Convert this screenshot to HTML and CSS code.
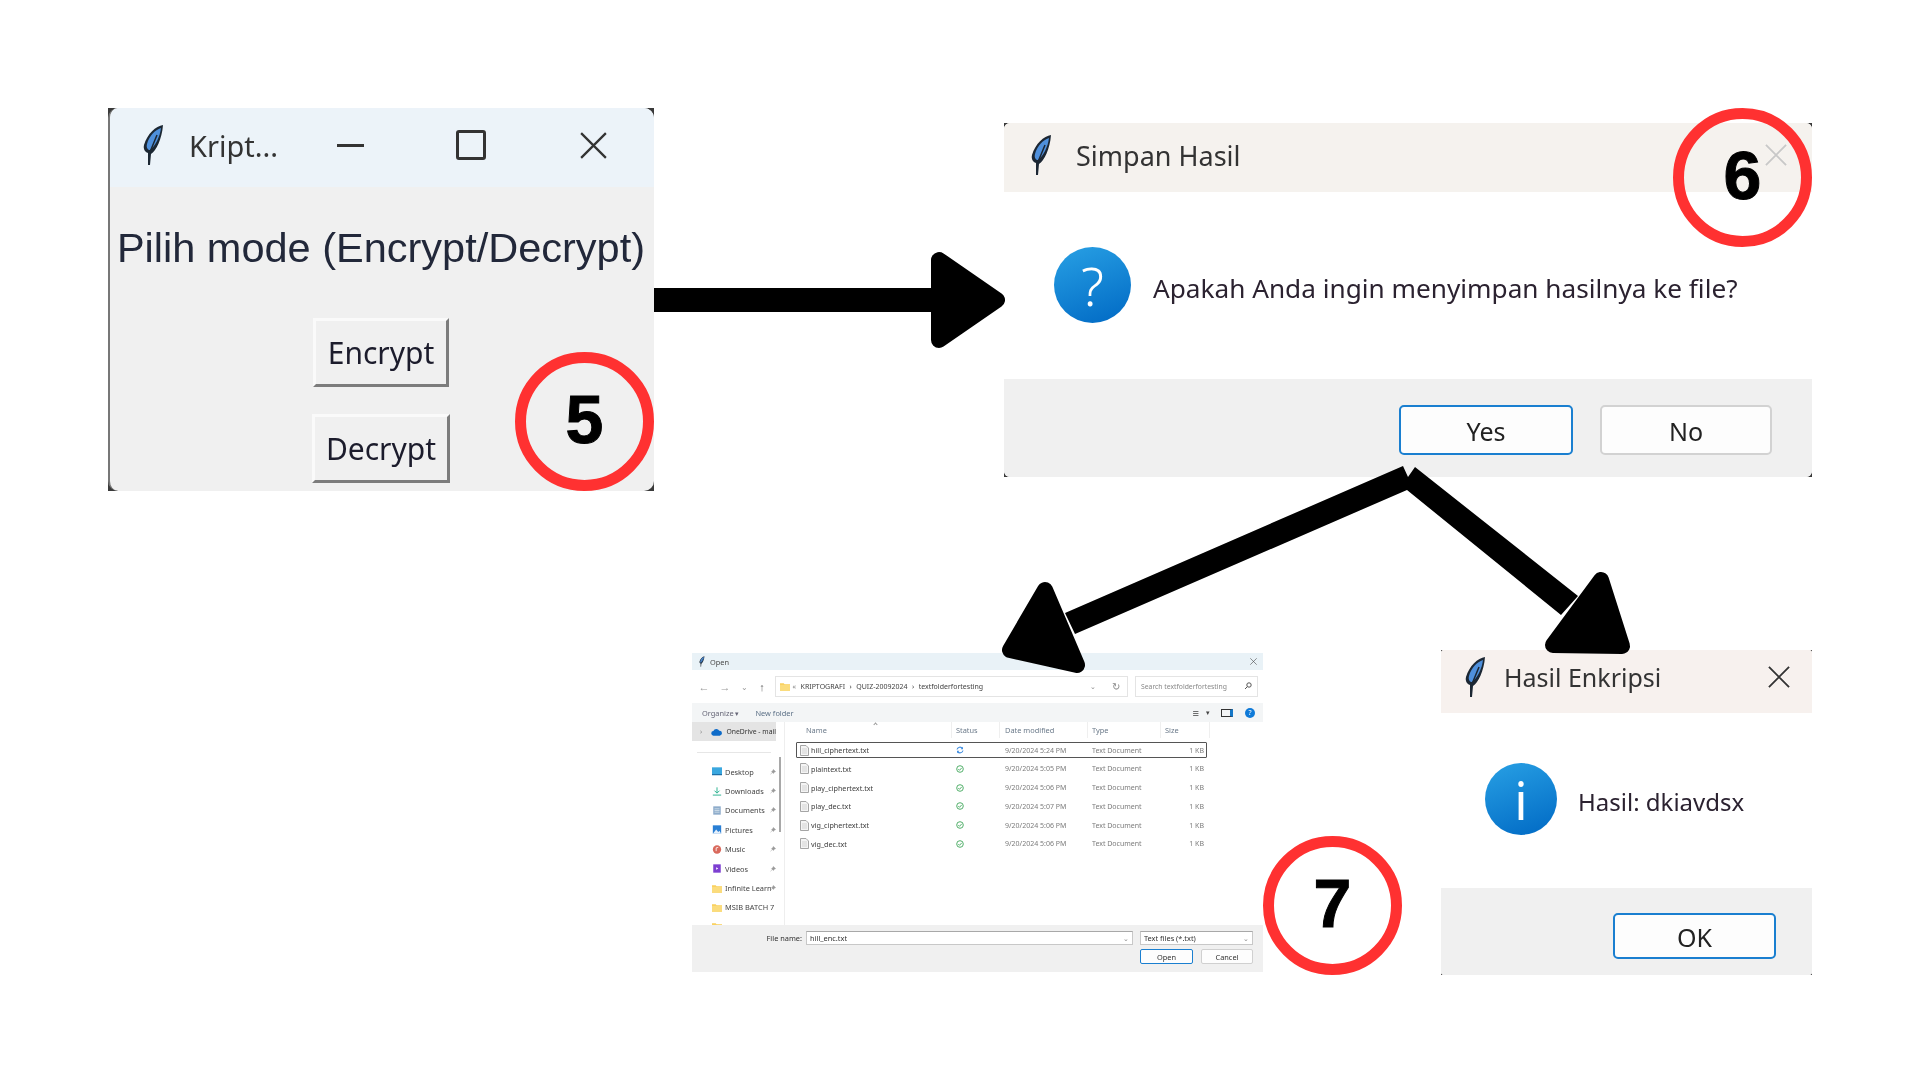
FILE: index.html
```html
<!DOCTYPE html>
<html lang="en">
<head>
    <meta charset="UTF-8">
    <title>Kriptografi - Alur Program</title>
    <link rel="stylesheet" href="styles.css">
</head>
<body>
    <svg class="defs" width="0" height="0">
        <symbol id="feather" viewBox="0 0 23 42">
            <path d="M21 1C14 2 5 10 2 21C1 25 3 28 6 29L6 41L8 41L9 30C14 27 20 15 21 1Z" fill="#1c2733"/>
            <path d="M19 4C13 6 7 12 5 20C4 24 6 26 8 26C13 22 18 13 19 4Z" fill="#4f90dc"/>
            <path d="M8 28L15 11" stroke="#1c2733" stroke-width="1.5" fill="none"/>
        </symbol>
        <symbol id="close" viewBox="0 0 24 24">
            <path d="M1 1L23 23M23 1L1 23" stroke="currentColor" stroke-width="2" fill="none"/>
        </symbol>
        <symbol id="folder" viewBox="0 0 12 10">
            <path d="M0 1h4.500l1 1.200H12V10H0Z" fill="#f9cf5b"/>
            <path d="M0 3h12v7H0Z" fill="#fbdc7c"/>
        </symbol>
        <symbol id="doc" viewBox="0 0 9 11">
            <path d="M.5.5h5.500l2.500 2.500v7.500h-8Z" fill="#f4f4f4" stroke="#a5a5a5"/>
            <path d="M2 4h5M2 6h5M2 8h5" stroke="#c4c4c4" stroke-width=".7"/>
        </symbol>
        <symbol id="ok" viewBox="0 0 8 8">
            <circle cx="4" cy="4" r="3.300" fill="none" stroke="#3fa75a" stroke-width=".9"/>
            <path d="M2.300 4.100l1.200 1.200 2.200-2.400" fill="none" stroke="#3fa75a" stroke-width=".9"/>
        </symbol>
        <symbol id="sync" viewBox="0 0 8 8">
            <path d="M1 3.500A3 3 0 0 1 6.400 2.400M7 4.500A3 3 0 0 1 1.600 5.600" fill="none" stroke="#3f8de0" stroke-width="1.100"/>
            <path d="M7 .8v2.400H4.600ZM1 7.200V4.800h2.400Z" fill="#3f8de0"/>
        </symbol>
        <symbol id="pin" viewBox="0 0 8 8">
            <path d="M4.500.5L7.500 3.500L6 4L4.500 6L2 3.500L4 2ZM2.800 4.800L.8 7.200" fill="#9a9a9a" stroke="#9a9a9a" stroke-width=".6"/>
        </symbol>
    </svg>

    <div class="stage">
        <!-- 5: pilih mode -->
        <div class="win win-mode">
            <div class="win-inner">
                <div class="titlebar title-blue mode-title">
                    <svg class="feather"><use href="#feather"/></svg>
                    <span class="mode-title-text">Kript...</span>
                    <span class="min-btn"></span>
                    <span class="max-btn"></span>
                    <svg class="mode-close"><use href="#close"/></svg>
                </div>
                <div class="mode-body">
                    <div class="mode-label">Pilih mode (Encrypt/Decrypt)</div>
                    <button class="tk-btn">Encrypt</button>
                    <button class="tk-btn tk-btn-wide">Decrypt</button>
                </div>
            </div>
        </div>

        <!-- 6: simpan hasil -->
        <div class="win win-save">
            <div class="win-inner">
                <div class="titlebar title-sand save-title">
                    <svg class="feather"><use href="#feather"/></svg>
                    <span>Simpan Hasil</span>
                    <svg class="dlg-close dlg-close-faded"><use href="#close"/></svg>
                </div>
                <div class="dlg-body save-body">
                    <div class="round-icon save-icon">?</div>
                    <div class="dlg-text">Apakah Anda ingin menyimpan hasilnya ke file?</div>
                </div>
                <div class="dlg-footer save-footer">
                    <button class="dlg-btn dlg-btn-focus">Yes</button>
                    <button class="dlg-btn">No</button>
                </div>
            </div>
        </div>

        <!-- 7: open dialog -->
        <div class="win-open">
            <div class="open-title">
                <svg class="open-feather"><use href="#feather"/></svg>
                <span class="open-title-text">Open</span>
                <svg class="open-close"><use href="#close"/></svg>
            </div>
            <div class="open-nav">
                <span class="nav-icon nav-back">←</span>
                <span class="nav-icon nav-forward">→</span>
                <span class="nav-icon nav-down">⌄</span>
                <span class="nav-icon nav-up">↑</span>
                <div class="address">
                    <svg class="side-icon"><use href="#folder"/></svg>
                    <span class="crumb crumb-more">«</span>
                    <span class="crumb">KRIPTOGRAFI</span>
                    <span class="crumb">›</span>
                    <span class="crumb">QUIZ-20092024</span>
                    <span class="crumb">›</span>
                    <span class="crumb">textfolderfortesting</span>
                    <span class="address-end">⌄</span>
                    <span class="address-refresh">↻</span>
                </div>
                <div class="search">
                    <span>Search textfolderfortesting</span>
                    <svg class="search-icon" viewBox="0 0 8 8"><circle cx="5" cy="3" r="2.200" fill="none" stroke="#555"/><path d="M3.400 4.600L1 7" stroke="#555"/></svg>
                </div>
            </div>
            <div class="open-toolbar">
                <span class="tool-organize">Organize ▾</span>
                <span class="tool-new">New folder</span>
                <span class="tool-view">≡</span>
                <span class="tool-caret">▾</span>
                <span class="tool-pane"></span>
                <span class="tool-help">?</span>
            </div>
            <div class="open-main">
                <div class="sidebar">
                    <div class="side-drive">
                        <span class="side-chevron">›</span>
                        <svg class="cloud" viewBox="0 0 12 8"><path d="M3 8a2.500 2.500 0 0 1-.4-5A3.500 3.500 0 0 1 9 2.600 2.700 2.700 0 0 1 9.500 8Z" fill="#0f6cc9"/></svg>
                        <span>OneDrive - mail</span>
                    </div>
                    <div class="side-rule"></div>
                    <div class="side-item">
                        <svg class="side-icon" viewBox="0 0 12 10"><rect width="12" height="8" fill="#3aa7df"/><rect y="8" width="12" height="1.500" fill="#1e6fa8"/></svg>
                        <span class="side-name">Desktop</span>
                        <svg class="pin"><use href="#pin"/></svg>
                    </div>
                    <div class="side-item">
                        <svg class="side-icon" viewBox="0 0 12 10"><path d="M6 0v6.500M3 4l3 3 3-3M1 9.300h10" stroke="#1fae8a" stroke-width="1.100" fill="none"/></svg>
                        <span class="side-name">Downloads</span>
                        <svg class="pin"><use href="#pin"/></svg>
                    </div>
                    <div class="side-item">
                        <svg class="side-icon" viewBox="0 0 12 10"><rect x="1.500" width="9" height="10" fill="#8eaccb"/><path d="M3 3h6M3 5h6M3 7h6" stroke="#e6eef5" stroke-width=".8"/></svg>
                        <span class="side-name">Documents</span>
                        <svg class="pin"><use href="#pin"/></svg>
                    </div>
                    <div class="side-item">
                        <svg class="side-icon" viewBox="0 0 12 10"><rect x="1" width="10" height="10" fill="#2a7fd4"/><path d="M1 10l4-5 2.500 3 1.500-1.500 2 3.500Z" fill="#e5f0fb"/></svg>
                        <span class="side-name">Pictures</span>
                        <svg class="pin"><use href="#pin"/></svg>
                    </div>
                    <div class="side-item">
                        <svg class="side-icon" viewBox="0 0 12 10"><circle cx="6" cy="5" r="5" fill="#d9695c"/><path d="M5 7V3l2.500-.5" stroke="#fff" fill="none"/></svg>
                        <span class="side-name">Music</span>
                        <svg class="pin"><use href="#pin"/></svg>
                    </div>
                    <div class="side-item">
                        <svg class="side-icon" viewBox="0 0 12 10"><rect x="1.500" width="9" height="10" fill="#7d3fd1"/><path d="M5 3.500l2.500 1.500L5 6.500Z" fill="#fff"/></svg>
                        <span class="side-name">Videos</span>
                        <svg class="pin"><use href="#pin"/></svg>
                    </div>
                    <div class="side-item">
                        <svg class="side-icon"><use href="#folder"/></svg>
                        <span class="side-name">Infinite Learn</span>
                        <svg class="pin"><use href="#pin"/></svg>
                    </div>
                    <div class="side-item">
                        <svg class="side-icon"><use href="#folder"/></svg>
                        <span class="side-name">MSIB BATCH 7</span>
                    </div>
                    <div class="side-item">
                        <svg class="side-icon"><use href="#folder"/></svg>
                        <span class="side-name">Canva Bulk</span>
                    </div>
                </div>
                <div class="side-scroll"><span class="side-thumb"></span></div>
                <div class="files">
                    <div class="file-head">
                        <span class="head-name">Name</span>
                        <span class="head-status">Status</span>
                        <span class="head-date">Date modified</span>
                        <span class="head-type">Type</span>
                        <span class="head-size">Size</span>
                        <span class="sort-caret"></span>
                    </div>
                    <div class="file-row file-row-on">
                        <svg class="file-icon"><use href="#doc"/></svg>
                        <span class="file-name">hill_ciphertext.txt</span>
                        <svg class="file-state"><use href="#sync"/></svg>
                        <span class="file-meta">9/20/2024 5:24 PM</span>
                        <span class="file-meta">Text Document</span>
                        <span class="file-meta file-size">1 KB</span>
                    </div>
                    <div class="file-row">
                        <svg class="file-icon"><use href="#doc"/></svg>
                        <span class="file-name">plaintext.txt</span>
                        <svg class="file-state"><use href="#ok"/></svg>
                        <span class="file-meta">9/20/2024 5:05 PM</span>
                        <span class="file-meta">Text Document</span>
                        <span class="file-meta file-size">1 KB</span>
                    </div>
                    <div class="file-row">
                        <svg class="file-icon"><use href="#doc"/></svg>
                        <span class="file-name">play_ciphertext.txt</span>
                        <svg class="file-state"><use href="#ok"/></svg>
                        <span class="file-meta">9/20/2024 5:06 PM</span>
                        <span class="file-meta">Text Document</span>
                        <span class="file-meta file-size">1 KB</span>
                    </div>
                    <div class="file-row">
                        <svg class="file-icon"><use href="#doc"/></svg>
                        <span class="file-name">play_dec.txt</span>
                        <svg class="file-state"><use href="#ok"/></svg>
                        <span class="file-meta">9/20/2024 5:07 PM</span>
                        <span class="file-meta">Text Document</span>
                        <span class="file-meta file-size">1 KB</span>
                    </div>
                    <div class="file-row">
                        <svg class="file-icon"><use href="#doc"/></svg>
                        <span class="file-name">vig_ciphertext.txt</span>
                        <svg class="file-state"><use href="#ok"/></svg>
                        <span class="file-meta">9/20/2024 5:06 PM</span>
                        <span class="file-meta">Text Document</span>
                        <span class="file-meta file-size">1 KB</span>
                    </div>
                    <div class="file-row">
                        <svg class="file-icon"><use href="#doc"/></svg>
                        <span class="file-name">vig_dec.txt</span>
                        <svg class="file-state"><use href="#ok"/></svg>
                        <span class="file-meta">9/20/2024 5:06 PM</span>
                        <span class="file-meta">Text Document</span>
                        <span class="file-meta file-size">1 KB</span>
                    </div>
                </div>
            </div>
            <div class="open-footer">
                <div class="open-line">
                    <span class="open-label">File name:</span>
                    <div class="open-input"><span>hill_enc.txt</span><span class="open-chevron">⌄</span></div>
                    <div class="open-filter"><span>Text files (*.txt)</span><span class="open-chevron">⌄</span></div>
                </div>
                <div class="open-actions">
                    <button class="open-btn open-btn-focus">Open</button>
                    <button class="open-btn">Cancel</button>
                </div>
            </div>
        </div>

        <!-- 7: hasil enkripsi -->
        <div class="win win-result">
            <div class="win-inner">
                <div class="titlebar title-rose result-title">
                    <svg class="feather result-feather"><use href="#feather"/></svg>
                    <span>Hasil Enkripsi</span>
                    <svg class="dlg-close"><use href="#close"/></svg>
                </div>
                <div class="dlg-body result-body">
                    <div class="round-icon result-icon">i</div>
                    <div class="dlg-text">Hasil: dkiavdsx</div>
                </div>
                <div class="dlg-footer result-footer">
                    <button class="dlg-btn dlg-btn-focus result-ok">OK</button>
                </div>
            </div>
        </div>

        <svg class="arrows" viewBox="0 0 1920 1080">
            <rect x="654" y="288" width="285" height="24"/>
            <polygon class="head" points="939,260 939,340 997,300"/>
            <polygon points="1065,613 1403,466 1408,477 1415,467 1578,596 1561,615 1407,490 1075,634"/>
            <polygon class="head" points="1045,590 1010,650 1077,665"/>
            <polygon class="head" points="1601,580 1622,646 1553,645"/>
        </svg>

        <div class="step step-5">5</div>
        <div class="step step-6">6</div>
        <div class="step step-7">7</div>
    </div>
</body>
</html>
```

FILE: styles.css
```css
body {
    margin: 0;
    background-color: #fff;
    font-family: "Noto Sans", "Open Sans", sans-serif;
    color: #222;
}
button {
    font-family: inherit;
    padding: 0;
}
.defs {
    position: absolute;
}
.stage {
    position: relative;
    width: 1920px;
    height: 1080px;
    overflow: hidden;
}

/* the pasted screenshots */
.win {
    position: absolute;
    background-color: #3a3a3a;
    filter: blur(0.7px);
}
.win-inner {
    display: flex;
    flex-direction: column;
    height: 100%;
    overflow: hidden;
    background-color: #fff;
}
.win-mode {
    left: 108px;
    top: 108px;
    width: 546px;
    height: 383px;
}
.win-mode .win-inner {
    border-radius: 10px;
    border-left: 2px solid #777;
    box-sizing: border-box;
    background-color: #f0f0f0;
}
.win-save {
    left: 1004px;
    top: 123px;
    width: 808px;
    height: 354px;
}
.win-save .win-inner {
    border-radius: 6px;
}
.win-result {
    left: 1441px;
    top: 650px;
    width: 371px;
    height: 325px;
}
.win-result .win-inner {
    border-radius: 3px;
}

.titlebar {
    display: flex;
    align-items: center;
    flex: none;
    box-sizing: border-box;
}
.title-blue {
    background-color: #ecf3f9;
}
.title-sand {
    background-color: #f5f2ee;
}
.title-rose {
    background-color: #f7f1ee;
}
.feather {
    width: 23px;
    height: 42px;
    flex: none;
}

/* 5 */
.mode-title {
    height: 79px;
    padding: 0 0 5px 32px;
}
.mode-title-text {
    margin-left: 24px;
    width: 148px;
    font-size: 29px;
    color: #333;
}
.min-btn {
    width: 27px;
    height: 3px;
    background-color: #333;
}
.max-btn {
    width: 24px;
    height: 24px;
    margin-left: 92px;
    border: 3px solid #333;
    border-radius: 3px;
}
.mode-close {
    width: 27px;
    height: 27px;
    margin-left: 94px;
    color: #333;
}
.mode-body {
    display: flex;
    flex-direction: column;
    align-items: center;
    flex: 1;
    padding-right: 2px;
}
.mode-label {
    margin-top: 33px;
    font-family: "Liberation Sans", Arial, sans-serif;
    font-size: 41.500px;
    line-height: 56px;
    white-space: nowrap;
    color: #22283a;
}
.tk-btn {
    width: 136px;
    height: 69px;
    margin-top: 42px;
    box-sizing: border-box;
    border: 3px solid;
    border-color: #fafafa #7c7c7c #7c7c7c #fafafa;
    background-color: #f0f0f0;
    font-size: 30px;
    color: #1c1c2c;
}
.tk-btn-wide {
    width: 138px;
    margin-top: 27px;
}

/* 6 and the result dialog */
.save-title {
    height: 69px;
    padding: 0 24px 5px 26px;
    font-size: 27px;
    color: #333;
}
.save-title span {
    margin-left: 23px;
}
.result-title {
    height: 63px;
    padding: 0 21px 10px 23px;
    font-size: 25px;
    color: #333;
}
.result-title span {
    margin-left: 17px;
}
.dlg-close {
    width: 24px;
    height: 22px;
    margin-left: auto;
    color: #333;
}
.dlg-close-faded {
    color: #c8c8c8;
}
.dlg-body {
    display: flex;
    align-items: center;
    flex: 1;
    background-color: #fff;
}
.save-body {
    padding-left: 50px;
}
.result-body {
    padding-left: 44px;
}
.round-icon {
    display: flex;
    align-items: center;
    justify-content: center;
    flex: none;
    border-radius: 50%;
    background: linear-gradient(160deg, #28a0e4, #0069c4);
    color: #fff;
}
.save-icon {
    width: 77px;
    height: 76px;
    margin-bottom: 1px;
    font-size: 54px;
    font-weight: 300;
}
.result-icon {
    width: 72px;
    height: 72px;
    margin-bottom: 3px;
    font-size: 52px;
}
.dlg-text {
    margin: 4px 0 0 22px;
    font-size: 26.200px;
    white-space: nowrap;
    color: #2b2230;
}
.result-icon + .dlg-text {
    margin: 2px 0 0 21px;
    font-size: 24px;
}
.dlg-footer {
    display: flex;
    justify-content: flex-end;
    flex: none;
    background-color: #f0f0f0;
}
.save-footer {
    height: 98px;
    padding: 26px 40px 0 0;
    box-sizing: border-box;
    gap: 27px;
}
.result-footer {
    height: 87px;
    padding: 25px 36px 0 0;
    box-sizing: border-box;
}
.dlg-btn {
    width: 172px;
    height: 50px;
    padding-top: 2px;
    box-sizing: border-box;
    border: 2px solid #d2d2d2;
    border-radius: 5px;
    background-color: #fdfdfd;
    font-size: 25px;
    color: #222;
}
.dlg-btn-focus {
    width: 174px;
    border-color: #1a7fd0;
}
.result-ok {
    width: 163px;
    height: 46px;
}

/* file dialog */
.win-open {
    position: absolute;
    left: 692px;
    top: 653px;
    width: 571px;
    height: 319px;
    display: flex;
    flex-direction: column;
    background-color: #fff;
    font-size: 7.400px;
    color: #4a4a4a;
    filter: blur(0.4px);
}
.open-title {
    display: flex;
    align-items: center;
    height: 17px;
    flex: none;
    padding: 0 7px;
    background-color: #e9f2f7;
}
.open-feather {
    width: 6px;
    height: 11px;
}
.open-title-text {
    margin-left: 5px;
}
.open-close {
    width: 7px;
    height: 7px;
    margin-left: auto;
    margin-right: -1px;
    color: #444;
}
.open-nav {
    display: flex;
    align-items: center;
    height: 33px;
    flex: none;
    padding-bottom: 1px;
    box-sizing: border-box;
}
.nav-icon {
    width: 12px;
    text-align: center;
    font-size: 11px;
    color: #9a9a9a;
}
.nav-back {
    margin-left: 6px;
}
.nav-forward {
    margin-left: 9px;
}
.nav-down {
    margin-left: 7px;
    font-size: 8px;
}
.nav-up {
    margin-left: 6px;
    color: #666;
}
.address {
    display: flex;
    align-items: center;
    gap: 4.500px;
    width: 353px;
    height: 21px;
    margin-left: 7px;
    padding-left: 4px;
    box-sizing: border-box;
    border: 1px solid #e4e4e4;
}
.crumb {
    font-size: 7px;
    color: #444;
}
.crumb-more {
    margin-left: -2px;
    color: #888;
}
.address-end {
    margin-left: auto;
    color: #888;
}
.address-refresh {
    margin: 0 7px 0 12px;
    font-size: 10px;
    color: #888;
}
.search {
    display: flex;
    align-items: center;
    justify-content: space-between;
    width: 123px;
    height: 21px;
    margin-left: 7px;
    padding: 0 5px;
    box-sizing: border-box;
    border: 1px solid #e4e4e4;
    font-size: 6.800px;
    color: #888;
}
.search-icon {
    width: 8px;
    height: 8px;
}
.open-toolbar {
    display: flex;
    align-items: center;
    height: 19px;
    flex: none;
    padding-left: 10px;
    background-color: #f3f5f6;
    color: #667;
}
.tool-new {
    margin-left: 16px;
    color: #5d7187;
}
.tool-view {
    margin-left: auto;
    font-size: 11px;
    color: #444;
}
.tool-caret {
    margin-left: 7px;
    font-size: 7px;
    color: #444;
}
.tool-pane {
    width: 8px;
    height: 6px;
    margin-left: 11px;
    border: 1px solid #333;
    border-right-width: 3px;
    border-right-color: #1577c7;
}
.tool-help {
    width: 10px;
    height: 10px;
    margin: 0 8px 0 12px;
    border-radius: 50%;
    background-color: #0f7ad8;
    color: #fff;
    font-size: 7px;
    line-height: 10px;
    text-align: center;
}
.open-main {
    display: flex;
    flex: 1;
    min-height: 0;
    overflow: hidden;
}
.sidebar {
    width: 84px;
    flex: none;
    overflow: hidden;
}
.side-drive {
    display: flex;
    align-items: center;
    gap: 4px;
    height: 19px;
    padding-left: 8px;
    background-color: #e4e4e4;
    font-size: 6.800px;
    white-space: nowrap;
    color: #333;
}
.side-chevron {
    width: 5px;
    color: #888;
}
.cloud {
    width: 11px;
    height: 8px;
    flex: none;
    margin-left: 3px;
}
.side-rule {
    height: 1px;
    margin: 11px 5px 9px 5px;
    background-color: #e6e6e6;
}
.side-item {
    display: flex;
    align-items: center;
    height: 19.400px;
    padding-left: 20px;
    white-space: nowrap;
}
.side-icon {
    width: 10px;
    height: 9px;
    flex: none;
}
.side-name {
    width: 45px;
    margin-left: 3px;
    color: #444;
}
.pin {
    width: 6px;
    height: 6px;
    flex: none;
}
.side-scroll {
    width: 9px;
    flex: none;
    border-right: 1px solid #eee;
    box-sizing: border-box;
}
.side-thumb {
    display: block;
    width: 2px;
    height: 75px;
    margin: 35px 0 0 3px;
    background-color: #a8a8a8;
}
.files {
    flex: 1;
    color: #444;
}
.file-head {
    position: relative;
    display: flex;
    height: 16px;
    padding-left: 21px;
    margin-bottom: 4px;
    line-height: 16px;
    color: #6b7a8a;
}
.file-head span {
    box-sizing: border-box;
    border-right: 1px solid #efefef;
}
.head-name {
    width: 146px;
}
.head-status {
    width: 48px;
    padding-left: 4px;
}
.head-date {
    width: 88px;
    padding-left: 5px;
}
.head-type {
    width: 73px;
    padding-left: 4px;
}
.head-size {
    width: 49px;
    padding-left: 4px;
}
.file-head .sort-caret {
    position: absolute;
    left: 89px;
    top: 1px;
    width: 3px;
    height: 3px;
    border: 0;
    border-top: 1px solid #999;
    border-left: 1px solid #999;
    transform: rotate(45deg);
}
.file-row {
    display: grid;
    grid-template-columns: 11px 145px 49px 87px 1fr 30px;
    align-items: center;
    height: 16px;
    width: 411px;
    margin: 0 0 2.800px 11px;
    padding-left: 3px;
    box-sizing: border-box;
    border: 1px solid transparent;
    white-space: nowrap;
}
.file-row-on {
    border-color: #555;
    border-radius: 1px;
}
.file-icon {
    width: 9px;
    height: 11px;
}
.file-state {
    width: 8px;
    height: 8px;
}
.file-name {
    font-size: 7.200px;
    color: #3d3d3d;
}
.file-meta {
    font-size: 7px;
    color: #7c7c7c;
}
.file-size {
    text-align: right;
    padding-right: 2px;
}
.open-footer {
    height: 47px;
    flex: none;
    box-sizing: border-box;
    padding-top: 6px;
    background-color: #f0f0f0;
}
.open-line {
    display: flex;
    align-items: center;
    height: 14px;
}
.open-label {
    width: 114px;
    padding-right: 4px;
    box-sizing: border-box;
    text-align: right;
    color: #333;
}
.open-input,
.open-filter {
    display: flex;
    align-items: center;
    justify-content: space-between;
    height: 14px;
    padding: 0 3px;
    box-sizing: border-box;
    border: 1px solid #c8c8c8;
    border-top-color: #a8a8a8;
    background-color: #fff;
    color: #333;
}
.open-input {
    width: 327px;
}
.open-filter {
    width: 113px;
    margin-left: 7px;
}
.open-chevron {
    color: #888;
}
.open-actions {
    display: flex;
    justify-content: flex-end;
    gap: 8px;
    margin: 4px 10px 0 0;
}
.open-btn {
    width: 52px;
    height: 15px;
    box-sizing: border-box;
    border: 1px solid #d0d0d0;
    border-radius: 2px;
    background-color: #fdfdfd;
    font-size: 7.400px;
    color: #333;
}
.open-btn-focus {
    width: 53px;
    border-color: #1a7fd0;
}

/* annotations on top of the screenshots */
.arrows {
    position: absolute;
    left: 0;
    top: 0;
    width: 1920px;
    height: 1080px;
}
.head {
    stroke: #000;
    stroke-width: 16;
    stroke-linejoin: round;
}
.step {
    position: absolute;
    display: flex;
    align-items: center;
    justify-content: center;
    width: 139px;
    height: 139px;
    padding-bottom: 6px;
    box-sizing: border-box;
    border: 11px solid #ff3131;
    border-radius: 50%;
    font-family: "Liberation Sans", Arial, sans-serif;
    font-weight: 700;
    font-size: 68px;
    color: #000;
    -webkit-text-stroke: 1px #000;
}
.step-5 {
    left: 515px;
    top: 352px;
}
.step-6 {
    left: 1673px;
    top: 108px;
}
.step-7 {
    left: 1263px;
    top: 836px;
}
```
